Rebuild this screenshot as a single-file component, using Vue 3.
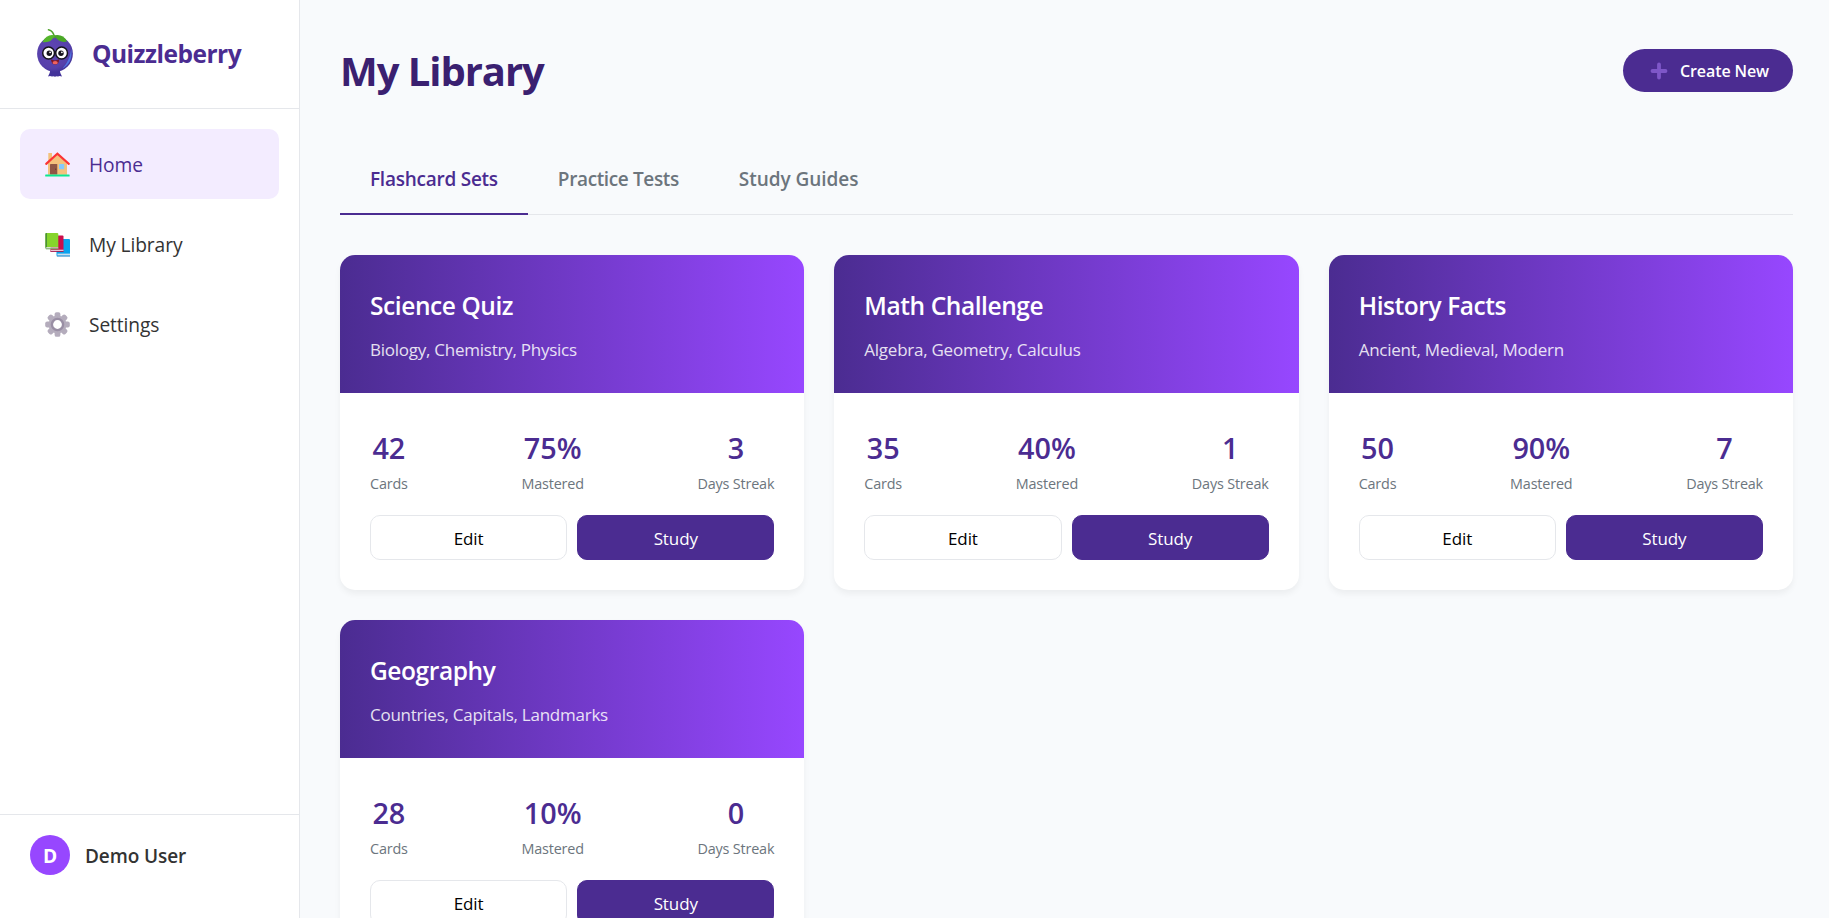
<script setup>
import { ref } from 'vue'

const navItems = [
  { id: 'home', label: 'Home' },
  { id: 'library', label: 'My Library' },
  { id: 'settings', label: 'Settings' },
]
const activeNav = ref('home')

const tabs = ['Flashcard Sets', 'Practice Tests', 'Study Guides']
const activeTab = ref(tabs[0])

const sets = [
  { title: 'Science Quiz', topics: 'Biology, Chemistry, Physics', cards: 42, mastered: 75, streak: 3 },
  { title: 'Math Challenge', topics: 'Algebra, Geometry, Calculus', cards: 35, mastered: 40, streak: 1 },
  { title: 'History Facts', topics: 'Ancient, Medieval, Modern', cards: 50, mastered: 90, streak: 7 },
  { title: 'Geography', topics: 'Countries, Capitals, Landmarks', cards: 28, mastered: 10, streak: 0 },
]

const teeth = [0, 45, 90, 135, 180, 225, 270, 315]
</script>

<template>
  <div class="app">
    <aside class="sidebar">
      <div class="brand">
        <svg class="brand-logo" viewBox="0 0 40 52" width="40" height="52">
          <defs>
            <radialGradient id="berry" cx="0.42" cy="0.4" r="0.62">
              <stop offset="0" stop-color="#5f46b4" />
              <stop offset="0.8" stop-color="#5640aa" />
              <stop offset="1" stop-color="#44349a" />
            </radialGradient>
          </defs>
          <path d="M15.500 42 L24.500 42 Q25 46.500 27 49.600 Q24.500 48.600 23 49.600 Q21.500 48.600 20 49.800 Q18.500 48.600 17 49.600 Q15 48.600 13 49.600 Q15 46.500 15.500 42Z" fill="#43339a" />
          <ellipse cx="20" cy="26.700" rx="17.900" ry="18.100" fill="url(#berry)" />
          <path d="M36.300 22 Q38 36 27.500 41.500 Q34.500 34 36.300 22Z" fill="#4f74e0" />
          <path d="M19.500 10.500 Q18.500 4 13.500 2.800" fill="none" stroke="#4fa32a" stroke-width="1.600" stroke-linecap="round" />
          <path d="M20 8.500 Q12 6.500 7.500 15 Q16 16.500 20 8.500Z" fill="#55b52b" />
          <path d="M19 8.500 Q28 6.500 32 14.500 Q24 16.500 19 8.500Z" fill="#4aa826" />
          <path d="M17.500 25.500 Q20 24 22.500 25.500" fill="none" stroke="#111" stroke-width="1.600" />
          <circle cx="13.600" cy="26" r="5.900" fill="#fff" stroke="#15131c" stroke-width="1.500" />
          <circle cx="26.600" cy="26" r="5.900" fill="#fff" stroke="#15131c" stroke-width="1.500" />
          <circle cx="14.300" cy="26.200" r="2.700" fill="#15131c" />
          <circle cx="26" cy="26.200" r="2.700" fill="#15131c" />
          <circle cx="15.100" cy="25.300" r="0.900" fill="#fff" />
          <circle cx="26.900" cy="25.300" r="0.900" fill="#fff" />
          <path d="M15.800 32.300 Q20 34.600 24.200 32.300 Q23.800 37.600 20.200 37.600 Q16.500 37.400 15.800 32.300Z" fill="#7e1626" />
          <ellipse cx="20.200" cy="35.700" rx="2.600" ry="1.600" fill="#f0635f" />
        </svg>
        <span class="brand-name">Quizzleberry</span>
      </div>

      <nav class="nav">
        <a
          v-for="item in navItems"
          :key="item.id"
          class="nav-item"
          :class="{ active: activeNav === item.id }"
          @click="activeNav = item.id"
        >
          <svg v-if="item.id === 'home'" class="nav-icon" viewBox="0 0 25 25">
            <path d="M3.300 1H7V12H3.300Z" fill="#f3c27c" />
            <path d="M3 11.500L12.500 2.500L22 11.500V22.700H3Z" fill="#f3c27c" />
            <path d="M1.200 11.900L12.400 1.700L23.800 11.900" fill="none" stroke="#fb3434" stroke-width="2.100" stroke-linecap="round" />
            <rect x="5" y="12" width="7.300" height="10.500" rx="0.600" fill="#8f5745" />
            <circle cx="10.700" cy="17.200" r="0.600" fill="#5f3529" />
            <rect x="14" y="12" width="5.200" height="5.200" rx="0.400" fill="#86c9fb" />
            <rect x="0.200" y="22.500" width="24.400" height="1.900" rx="0.500" fill="#0ce890" />
          </svg>
          <svg v-else-if="item.id === 'library'" class="nav-icon" viewBox="0 0 25 25">
            <path d="M11.500 7H24Q25 7 25 8V24H12.500Q11.500 24 11.500 23Z" fill="#0aa3ee" />
            <path d="M12.400 21.600H25V23.600H12.400Z" fill="#c9dff0" />
            <path d="M11.500 23.700H25V24.400H12Z" fill="#0879c4" />
            <path d="M5.500 3.500H17.500Q18.500 3.500 18.500 4.500V19.500H5.500Z" fill="#cb0d4c" />
            <path d="M6 17.700H18.500V19.300H6Z" fill="#e6c7d6" />
            <path d="M5.300 19.300H18.500V20H5.600Z" fill="#9a0c45" />
            <path d="M0.400 2Q0.400 1 1.400 1H12.200Q13.300 1 13.300 2V15.200H0.400Z" fill="#86d42c" />
            <path d="M0.400 2Q0.400 1 1.400 1H2V15.500L0.400 16.500Z" fill="#4b9138" />
            <path d="M1 15.300H13.300V16.800H1Z" fill="#d5dcd6" />
            <path d="M0.500 16.600H13.300V17.300H1Z" fill="#4b9138" />
          </svg>
          <svg v-else class="nav-icon" viewBox="0 0 25 25">
            <rect
              v-for="a in teeth"
              :key="a"
              x="9.600"
              y="0.200"
              width="5.800"
              height="8"
              rx="1.900"
              fill="#b4acbc"
              :transform="`rotate(${a} 12.5 12.5)`"
            />
            <circle cx="12.500" cy="12.500" r="6.900" fill="none" stroke="#b4acbc" stroke-width="4" />
            <circle cx="12.500" cy="12.500" r="5.600" fill="#fff" stroke="#998ea4" stroke-width="2.400" />
          </svg>
          <span class="nav-label">{{ item.label }}</span>
        </a>
      </nav>

      <div class="user">
        <span class="avatar">D</span>
        <span class="user-name">Demo User</span>
      </div>
    </aside>

    <main class="main">
      <header class="header">
        <h1 class="title">My Library</h1>
        <button class="create">
          <svg class="plus" viewBox="0 0 18 18" width="18" height="18">
            <path d="M9 2.500V15.500M2.500 9H15.500" stroke="#7e57c8" stroke-width="3.800" stroke-linecap="round" />
          </svg>
          <span>Create New</span>
        </button>
      </header>

      <div class="tabs">
        <button
          v-for="tab in tabs"
          :key="tab"
          class="tab"
          :class="{ active: activeTab === tab }"
          @click="activeTab = tab"
        >{{ tab }}</button>
      </div>

      <section class="grid">
        <article v-for="set in sets" :key="set.title" class="card">
          <div class="card-head">
            <h2 class="card-title">{{ set.title }}</h2>
            <p class="card-topics">{{ set.topics }}</p>
          </div>
          <div class="card-body">
            <div class="stats">
              <div class="stat">
                <div class="stat-value">{{ set.cards }}</div>
                <div class="stat-label">Cards</div>
              </div>
              <div class="stat">
                <div class="stat-value">{{ set.mastered }}%</div>
                <div class="stat-label">Mastered</div>
              </div>
              <div class="stat">
                <div class="stat-value">{{ set.streak }}</div>
                <div class="stat-label">Days Streak</div>
              </div>
            </div>
            <div class="actions">
              <button class="btn">Edit</button>
              <button class="btn primary">Study</button>
            </div>
          </div>
        </article>
      </section>
    </main>
  </div>
</template>

<style>
body {
  margin: 0;
  overflow: hidden;
}
</style>

<style scoped>
.app,
.app * {
  box-sizing: border-box;
}

.app {
  display: flex;
  height: 100vh;
  overflow: hidden;
  background: #f8fafc;
  color: #333;
  font-family: "Open Sans", "Noto Sans", sans-serif;
}

button {
  font-family: inherit;
  margin: 0;
  cursor: pointer;
}

.sidebar {
  display: flex;
  flex-direction: column;
  flex: none;
  width: 300px;
  background: #fff;
  border-right: 1px solid #e5e7eb;
}

.brand {
  display: flex;
  align-items: center;
  gap: 17px;
  height: 109px;
  padding-left: 35px;
  border-bottom: 1px solid #e5e7eb;
}

.brand-logo {
  flex: none;
  margin-bottom: 3px;
}

.brand-name {
  font-size: 24.5px;
  font-weight: 700;
  line-height: 34px;
  letter-spacing: -0.5px;
  color: #4b2c91;
}

.nav {
  display: flex;
  flex-direction: column;
  gap: 10px;
  padding: 20px;
}

.nav-item {
  display: flex;
  align-items: center;
  gap: 19px;
  height: 70px;
  padding: 0 25px;
  border-radius: 10px;
  font-size: 19.2px;
  line-height: 28px;
  letter-spacing: -0.1px;
  cursor: pointer;
}

.nav-item.active {
  background: #f3ecff;
  color: #4b2c91;
}

.nav-icon {
  flex: none;
  width: 25px;
  height: 25px;
}

.nav-label {
  padding-top: 2px;
}

.user {
  display: flex;
  align-items: flex-start;
  gap: 15px;
  height: 104px;
  margin-top: auto;
  padding: 20px 30px;
  border-top: 1px solid #e5e7eb;
}

.avatar {
  width: 40px;
  height: 40px;
  border-radius: 50%;
  background: #9747ff;
  color: #fff;
  font-size: 19.2px;
  font-weight: 700;
  line-height: 42px;
  text-align: center;
}

.user-name {
  font-size: 19px;
  font-weight: 600;
  line-height: 42px;
  letter-spacing: -0.1px;
}

.main {
  flex: 1;
  min-width: 0;
  padding: 40px 36px 0 40px;
}

.header {
  display: flex;
  align-items: center;
  justify-content: space-between;
  height: 61px;
}

.title {
  margin: 0;
  font-size: 40px;
  font-weight: 700;
  line-height: 60px;
  letter-spacing: -1.05px;
  color: #3a2070;
}

.create {
  display: flex;
  align-items: center;
  gap: 12px;
  width: 170px;
  height: 43px;
  padding: 0 0 0 27px;
  border: 0;
  border-radius: 22px;
  background: #4b2c91;
  color: #fff;
  font-size: 16px;
  font-weight: 600;
  letter-spacing: -0.1px;
  white-space: nowrap;
}

.plus {
  flex: none;
  margin-top: 1px;
}

.tabs {
  display: flex;
  height: 72px;
  margin: 42px 0 40px;
  border-bottom: 1px solid #e5e7eb;
}

.tab {
  height: 72px;
  padding: 2px 30px 0;
  border: 0;
  border-bottom: 2px solid transparent;
  background: none;
  color: #6c757d;
  font-size: 19px;
  font-weight: 600;
  letter-spacing: -0.25px;
}

.tab:nth-child(2) {
  letter-spacing: -0.37px;
}

.tab:nth-child(3) {
  letter-spacing: -0.05px;
}

.tab.active {
  color: #4b2c91;
  border-bottom-color: #4b2c91;
}

.grid {
  display: grid;
  grid-template-columns: repeat(3, 1fr);
  gap: 30px;
}

.card {
  overflow: hidden;
  border-radius: 15px;
  background: #fff;
  box-shadow: 0 4px 6px rgba(0, 0, 0, 0.05);
}

.card-head {
  height: 138px;
  padding: 31px 30px 0;
  background: linear-gradient(90deg, #4b2c91, #9747ff);
  color: #fff;
}

.card-title {
  margin: 0 0 10px;
  font-size: 24.5px;
  font-weight: 600;
  line-height: 40px;
  letter-spacing: -0.42px;
}

.card-topics {
  margin: 0;
  font-size: 17px;
  line-height: 27px;
  letter-spacing: -0.25px;
  opacity: 0.85;
}

.card-body {
  padding: 31px 30px 30px;
}

.stats {
  display: flex;
  justify-content: space-between;
  margin-bottom: 19px;
}

.stat {
  text-align: center;
}

.stat-value {
  font-size: 28.8px;
  font-weight: 600;
  line-height: 48px;
  color: #4b2c91;
}

.stat-label {
  font-size: 14.4px;
  line-height: 24px;
  letter-spacing: -0.18px;
  color: #6c757d;
}

.actions {
  display: flex;
  gap: 10px;
}

.btn {
  flex: 1;
  height: 45px;
  padding: 1px 0 0;
  border: 1px solid #e5e7eb;
  border-radius: 10px;
  background: #fff;
  color: #000;
  font-size: 17px;
  letter-spacing: -0.1px;
}

.btn.primary {
  border-color: #4b2c91;
  background: #4b2c91;
  color: #fff;
}
</style>
